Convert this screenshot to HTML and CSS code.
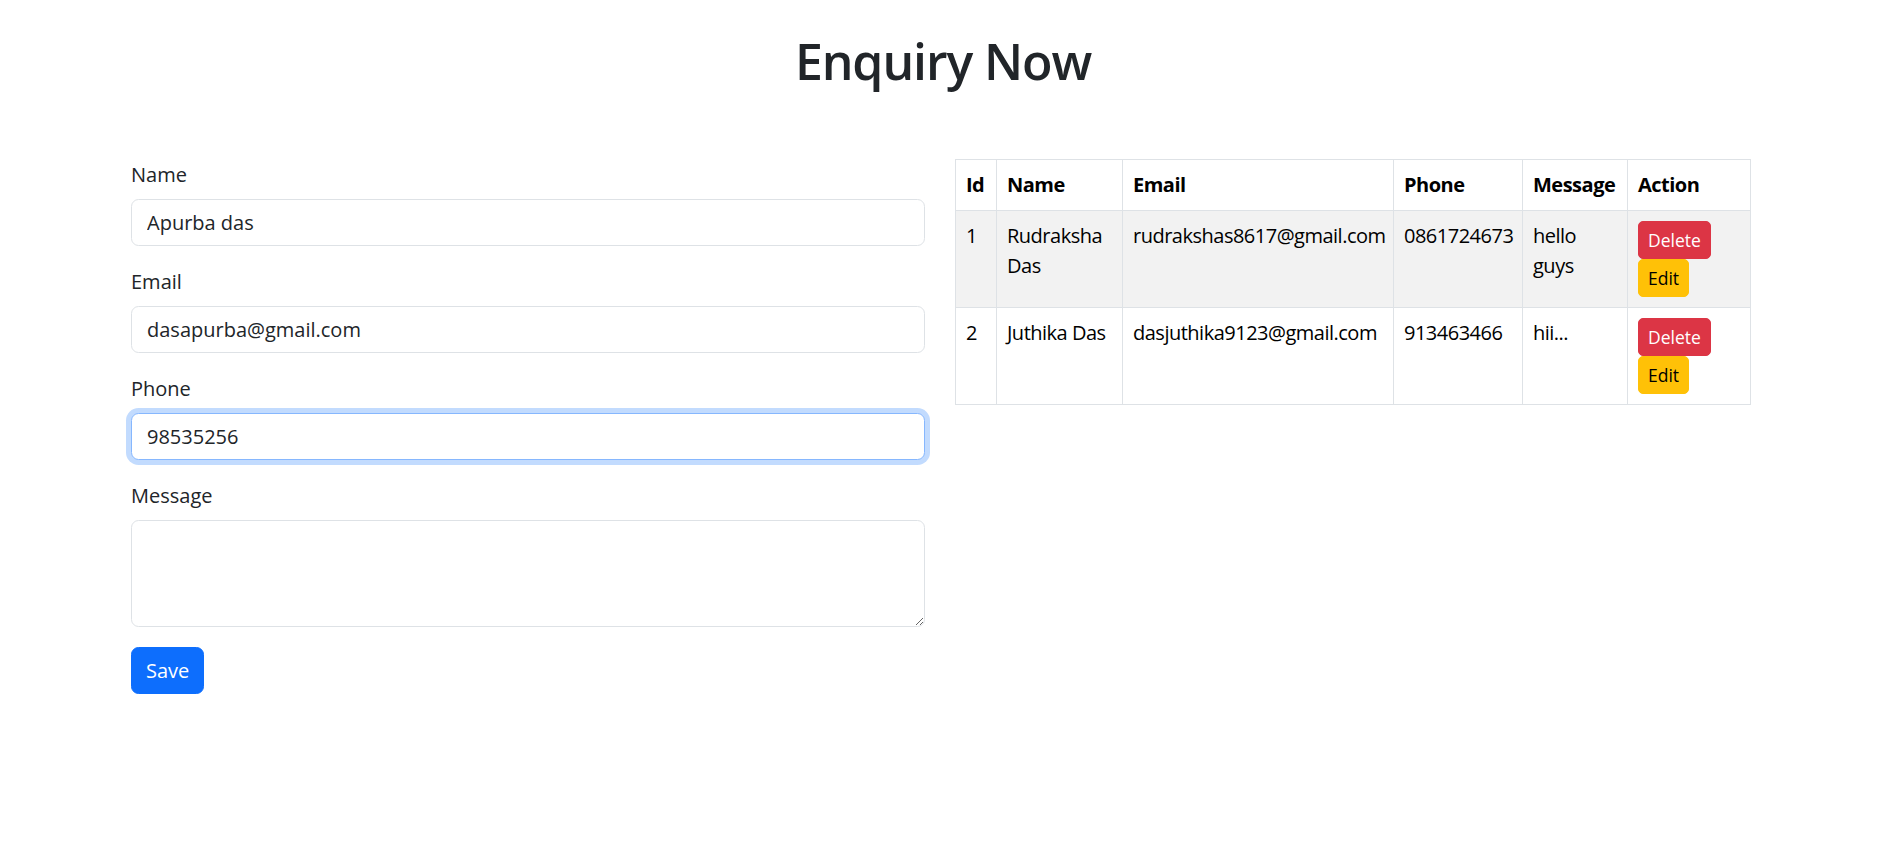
FILE: index.html
```html
<!DOCTYPE html>
<html lang="en">
<head>
<meta charset="utf-8">
<title>Enquiry Now</title>
<link rel="stylesheet" href="styles.css">
</head>
<body>
  <h1 class="page-title">Enquiry Now</h1>
  <div class="container">
    <div class="layout">
      <form class="enquiry-form">
        <div class="field">
          <label class="field-label" for="name">Name</label>
          <input class="field-input" id="name" type="text" value="Apurba das">
        </div>
        <div class="field">
          <label class="field-label" for="email">Email</label>
          <input class="field-input" id="email" type="email" value="dasapurba@gmail.com">
        </div>
        <div class="field">
          <label class="field-label" for="phone">Phone</label>
          <input class="field-input is-focused" id="phone" type="text" value="98535256">
        </div>
        <div class="field">
          <label class="field-label" for="message">Message</label>
          <textarea class="field-input field-textarea" id="message"></textarea>
        </div>
        <button type="button" class="btn btn-primary">Save</button>
      </form>

      <div class="table-wrap">
        <table class="data-table">
          <colgroup>
            <col class="c-id">
            <col class="c-name">
            <col class="c-email">
            <col class="c-phone">
            <col class="c-message">
            <col class="c-action">
          </colgroup>
          <thead>
            <tr>
              <th>Id</th>
              <th>Name</th>
              <th>Email</th>
              <th>Phone</th>
              <th>Message</th>
              <th>Action</th>
            </tr>
          </thead>
          <tbody>
            <tr>
              <td>1</td>
              <td>Rudraksha Das</td>
              <td>rudrakshas8617@gmail.com</td>
              <td>0861724673</td>
              <td>hello guys</td>
              <td>
                <div class="actions">
                  <button type="button" class="btn btn-sm btn-danger">Delete</button>
                  <button type="button" class="btn btn-sm btn-warning">Edit</button>
                </div>
              </td>
            </tr>
            <tr>
              <td>2</td>
              <td>Juthika Das</td>
              <td>dasjuthika9123@gmail.com</td>
              <td>913463466</td>
              <td>hii...</td>
              <td>
                <div class="actions">
                  <button type="button" class="btn btn-sm btn-danger">Delete</button>
                  <button type="button" class="btn btn-sm btn-warning">Edit</button>
                </div>
              </td>
            </tr>
          </tbody>
        </table>
      </div>
    </div>
  </div>
</body>
</html>
```

FILE: styles.css
```css
* {
  box-sizing: border-box;
}

html, body {
  margin: 0;
  padding: 0;
  background: #fff;
}

body {
  font-family: "Segoe UI", "Open Sans", "Noto Sans", sans-serif;
  font-size: 20px;
  line-height: 30px;
  color: #212529;
}

.page-title {
  margin: 31px 0 0;
  font-size: 50px;
  line-height: 60px;
  font-weight: 600;
  letter-spacing: -1.1px;
  text-align: center;
  color: #212529;
}

.container {
  max-width: 1650px;
  margin: 68px auto 0;
  padding: 0 17px 0 13px;
}

.layout {
  display: grid;
  grid-template-columns: 1fr 1fr;
  column-gap: 30px;
  align-items: start;
}

.enquiry-form {
  display: flex;
  flex-direction: column;
  align-items: flex-start;
}

.field {
  width: 100%;
  margin-bottom: 20px;
}

.field-label {
  display: block;
  margin-bottom: 10px;
  padding-top: 1px;
  height: 30px;
  line-height: 30px;
}

.field-input {
  display: block;
  width: 100%;
  height: 47px;
  padding: 0 15px;
  font-family: inherit;
  font-size: 20px;
  line-height: 30px;
  color: #212529;
  background: #fff;
  border: 1px solid #dee2e6;
  border-radius: 7.5px;
  outline: none;
}

.field-input.is-focused {
  border-color: #86b7fe;
  box-shadow: 0 0 0 5px rgba(13, 110, 253, 0.25);
}

.field-textarea {
  height: 107px;
  padding: 7px 15px;
  resize: vertical;
}

.btn {
  display: inline-block;
  font-family: inherit;
  font-weight: 400;
  text-align: center;
  white-space: nowrap;
  cursor: pointer;
  border: 1px solid transparent;
}

.btn-primary {
  height: 47px;
  padding: 0 14px;
  font-size: 20px;
  line-height: 30px;
  border-radius: 7.5px;
  color: #fff;
  background: #0d6efd;
  border-color: #0d6efd;
}

.btn-sm {
  height: 38px;
  padding: 0 9px;
  font-size: 17.5px;
  line-height: 26px;
  border-radius: 5px;
}

.btn-danger {
  color: #fff;
  background: #dc3545;
  border-color: #dc3545;
}

.btn-warning {
  color: #000;
  background: #ffc107;
  border-color: #ffc107;
}

.data-table {
  width: 100%;
  table-layout: fixed;
  border-collapse: collapse;
  color: #000;
  border: 1px solid #dee2e6;
}

.c-id { width: 41px; }
.c-name { width: 126px; }
.c-email { width: 271px; }
.c-phone { width: 129px; }
.c-message { width: 105px; }
.c-action { width: 123px; }

.data-table th,
.data-table td {
  padding: 10px;
  border: 1px solid #dee2e6;
  text-align: left;
  vertical-align: top;
  line-height: 30px;
  letter-spacing: -0.5px;
}

.data-table th {
  font-weight: 700;
  white-space: nowrap;
}

.data-table tbody tr:nth-child(odd) td {
  background: #f2f2f2;
}

.actions {
  display: flex;
  flex-direction: column;
  align-items: flex-start;
}

.actions .btn {
  letter-spacing: 0;
}
```
